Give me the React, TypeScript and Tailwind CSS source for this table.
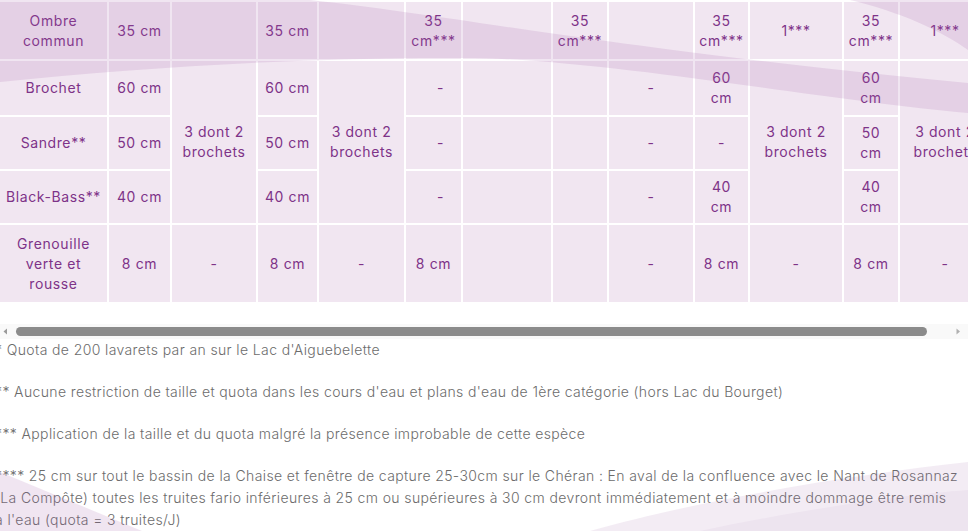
import React from "react";

type Cell = { text: string; span?: boolean; nudge?: boolean };

const c = (text: string, nudge = false): Cell => ({ text, nudge });
const quota: Cell = { text: "3 dont 2\nbrochets", span: true };

// lignes du tableau (les cellules "quota" couvrent 3 lignes)
const rows: Cell[][] = [
  [c("Ombre\ncommun"), c("35 cm"), c(""), c("35 cm"), c(""), c("35\ncm***"), c(""), c("35\ncm***"), c(""), c("35\ncm***"), c("1***"), c("35\ncm***"), c("1***")],
  [c("Brochet"), c("60 cm"), quota, c("60 cm"), quota, c("-", true), c(""), c(""), c("-"), c("60\ncm"), quota, c("60\ncm"), quota],
  [c("Sandre**"), c("50 cm"), c("50 cm"), c("-", true), c(""), c(""), c("-"), c("-"), c("50\ncm")],
  [c("Black-Bass**"), c("40 cm"), c("40 cm"), c("-", true), c(""), c(""), c("-"), c("40\ncm"), c("40\ncm")],
  [c("Grenouille\nverte et\nrousse"), c("8 cm"), c("-"), c("8 cm"), c("-"), c("8 cm"), c(""), c(""), c("-"), c("8 cm"), c("-"), c("8 cm"), c("-")],
];

const notes = [
  ["* Quota de 200 lavarets par an sur le Lac d'Aiguebelette"],
  ["** Aucune restriction de taille et quota dans les cours d'eau et plans d'eau de 1ère catégorie (hors Lac du Bourget)"],
  ["*** Application de la taille et du quota malgré la présence improbable de cette espèce"],
  [
    "**** 25 cm sur tout le bassin de la Chaise et fenêtre de capture 25-30cm sur le Chéran : En aval de la confluence avec le Nant de Rosannaz",
    "(La Compôte) toutes les truites fario inférieures à 25 cm ou supérieures à 30 cm devront immédiatement et à moindre dommage être remis",
    "à l'eau (quota = 3 truites/J)",
  ],
];

const TableCell = ({ cell }: { cell: Cell }) => (
  <div
    className={`flex items-center justify-center whitespace-nowrap text-center bg-[#f1e6f1] ${cell.span ? "row-span-3" : ""}`}
  >
    <span className={cell.nudge ? "ml-[14px]" : ""}>
      {cell.text.split("\n").map((line, i) => (
        <React.Fragment key={i}>
          {i > 0 && <br />}
          {line}
        </React.Fragment>
      ))}
    </span>
  </div>
);

const Scrollbar = () => (
  <div className="mt-[22px] flex h-[15px] items-center bg-[#f9f9f9]">
    <svg width="16" height="15" viewBox="0 0 16 15" className="shrink-0">
      <path d="M7 4.5 L3.5 7.5 L7 10.5 Z" fill="#9a9a9a" />
    </svg>
    <div className="h-[9px] w-[911px] rounded-full bg-[#8b8b8b]" />
    <div className="flex-1" />
    <svg width="12" height="15" viewBox="0 0 12 15" className="mr-[3px] shrink-0">
      <path d="M3.5 4.5 L7 7.5 L3.5 10.5 Z" fill="#b0b0b0" />
    </svg>
  </div>
);

export default function App() {
  return (
    <div className="relative h-[531px] w-[968px] overflow-hidden bg-white font-['Inter',sans-serif]">
      <div className="overflow-hidden pt-[2px]">
        <div className="grid w-max grid-cols-[107px_61px_84px_59px_85px_55px_88px_54px_84px_53px_92px_54px_90px] grid-rows-[57px_54px_52px_52px_77px] gap-[2px] bg-white text-[14px] leading-[20px] tracking-[0.6px] text-[#7e3388]">
          {rows.flat().map((cell, i) => (
            <TableCell key={i} cell={cell} />
          ))}
        </div>
      </div>

      <Scrollbar />

      <div className="-ml-[5px] text-[14px] font-light leading-[22px] tracking-[0.38px] text-[#6c6c6c]">
        {notes.map((lines, i) => (
          <p key={i} className="mb-[20px] whitespace-nowrap">
            {lines.map((line, j) => (
              <React.Fragment key={j}>
                {j > 0 && <br />}
                {line}
              </React.Fragment>
            ))}
          </p>
        ))}
      </div>

      {/* vagues décoratives du fond */}
      <svg
        className="pointer-events-none absolute inset-0"
        width="968"
        height="531"
        viewBox="0 0 968 531"
      >
        <g fill="#a060a8">
          <path
            opacity="0.16"
            d="M0 0 L310 0 C450 15 620 50 968 83 L968 113 C820 100 600 58 463 58 C330 57 150 66 0 82 Z"
          />
          <path opacity="0.16" d="M850 0 L968 0 L968 50 C940 30 900 12 850 0 Z" />
          <path opacity="0.16" d="M0 472 L142 531 L0 531 Z" />
          <path opacity="0.12" d="M590 531 C700 500 850 475 968 462 L968 531 Z" />
          <path opacity="0.06" d="M700 531 C800 510 900 495 968 490 L968 531 Z" />
        </g>
      </svg>
    </div>
  );
}
